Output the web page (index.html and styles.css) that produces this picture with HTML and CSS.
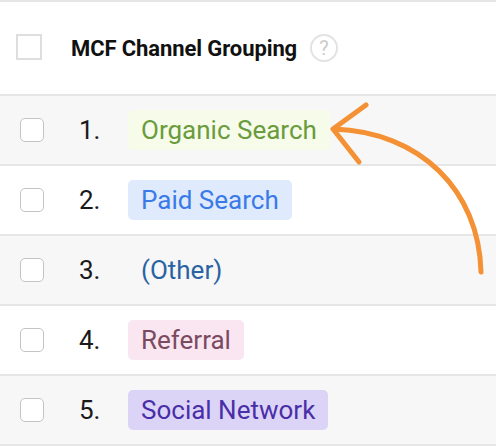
FILE: index.html
```html
<!DOCTYPE html>
<html>
<head>
<meta charset="utf-8">
<link rel="stylesheet" href="styles.css">
</head>
<body>
<div class="table">
  <div class="head">
    <span class="hcheck"></span>
    <span class="htitle">MCF Channel Grouping</span>
    <span class="help">?</span>
  </div>
  <div class="row alt">
    <span class="check"></span><span class="num">1.</span><span class="tag organic">Organic Search</span>
  </div>
  <div class="row">
    <span class="check"></span><span class="num">2.</span><span class="tag paid">Paid Search</span>
  </div>
  <div class="row alt">
    <span class="check"></span><span class="num">3.</span><span class="tag other">(Other)</span>
  </div>
  <div class="row">
    <span class="check"></span><span class="num">4.</span><span class="tag referral">Referral</span>
  </div>
  <div class="row alt">
    <span class="check"></span><span class="num">5.</span><span class="tag social">Social Network</span>
  </div>
  <svg class="arrow" width="496" height="448" viewBox="0 0 496 448">
    <g fill="none" stroke="#f39134" stroke-width="5" stroke-linecap="round" stroke-linejoin="round">
      <path d="M481 272 C479 190 420 132 334 129"/>
      <path d="M366 105 L333 129 L359 162"/>
    </g>
  </svg>
</div>
</body>
</html>
```
FILE: styles.css
```css
* { box-sizing: border-box; }
html, body { margin: 0; padding: 0; background: #fff; }
body { font-family: Roboto, "Liberation Sans", sans-serif; width: 496px; height: 448px; overflow: hidden; }
.table { position: relative; border-top: 2px solid #e6e6e6; }
.head {
  height: 94px;
  border-bottom: 2px solid #e6e6e6;
  display: flex;
  align-items: center;
  padding-left: 16px;
}
.hcheck { width: 26px; height: 26px; border: 2px solid #dedede; background: #fff; margin-top: -2px; }
.htitle { margin-left: 29px; font-weight: 700; font-size: 22px; color: #111; letter-spacing: -0.1px; }
.help {
  margin-left: 13px;
  width: 28px; height: 28px;
  border: 2px solid #e3e3e3; border-radius: 50%;
  display: flex; align-items: center; justify-content: center;
  color: #cccccc; font-size: 20px; font-weight: 400;
}
.row {
  height: 70px;
  border-bottom: 2px solid #e6e6e6;
  display: flex;
  align-items: center;
  padding-left: 20px;
}
.row.alt { background: #f7f7f7; }
.check { width: 24px; height: 24px; border: 1.5px solid #c4c4c4; border-radius: 5px; background: #fff; }
.num { margin-left: 35px; width: 49px; font-size: 26px; color: #1a1a1a; }
.tag { height: 40px; padding: 0 13px; border-radius: 5px; font-size: 26px; display: flex; align-items: center; }
.organic { background: #f6fce9; color: #6a9b3c; }
.paid { background: #dfeafd; color: #3a7ae8; }
.other { color: #2a63a2; }
.referral { background: #fae6f1; color: #7a4b60; }
.social { background: #dcd4f6; color: #4a2ea8; }
.arrow { position: absolute; left: 0; top: -2px; pointer-events: none; }
```
